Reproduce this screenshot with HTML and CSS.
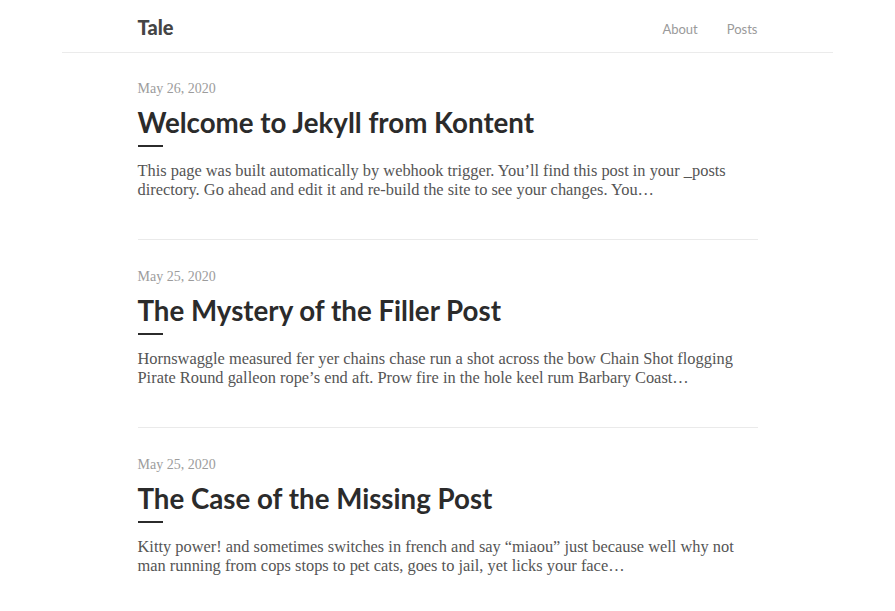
FILE: index.html
```html
<!DOCTYPE html>
<html lang="en">
<head>
<meta charset="utf-8">
<title>Tale</title>
<link rel="stylesheet" href="styles.css">
</head>
<body>
<header class="site-header">
  <nav class="nav-inner">
    <a class="brand" href="#">Tale</a>
    <div class="nav-links">
      <a href="#">About</a>
      <a href="#">Posts</a>
    </div>
  </nav>
</header>
<main class="container">
  <article class="post">
    <div class="post-date">May 26, 2020</div>
    <h2 class="post-title">Welcome to Jekyll from Kontent</h2>
    <div class="post-line"></div>
    <p class="post-excerpt">This page was built automatically by webhook trigger. You’ll find this post in your _posts directory. Go ahead and edit it and re-build the site to see your changes. You…</p>
  </article>
  <article class="post">
    <div class="post-date">May 25, 2020</div>
    <h2 class="post-title">The Mystery of the Filler Post</h2>
    <div class="post-line"></div>
    <p class="post-excerpt">Hornswaggle measured fer yer chains chase run a shot across the bow Chain Shot flogging Pirate Round galleon rope’s end aft. Prow fire in the hole keel rum Barbary Coast…</p>
  </article>
  <article class="post">
    <div class="post-date">May 25, 2020</div>
    <h2 class="post-title">The Case of the Missing Post</h2>
    <div class="post-line"></div>
    <p class="post-excerpt">Kitty power! and sometimes switches in french and say “miaou” just because well why not man running from cops stops to pet cats, goes to jail, yet licks your face…</p>
  </article>
</main>
</body>
</html>
```
FILE: styles.css
```css
html, body {
  margin: 0;
  padding: 0;
  background: #fff;
}
body {
  font-family: "Liberation Serif", "Times New Roman", serif;
  color: #555;
}
a {
  text-decoration: none;
}
.site-header {
  width: 771px;
  margin: 0 auto;
  border-bottom: 1px solid #ebebeb;
}
.nav-inner {
  width: 620px;
  height: 52px;
  margin: 0 auto;
  display: flex;
  align-items: center;
  justify-content: space-between;
}
.brand {
  font-family: Lato, "Liberation Sans", sans-serif;
  font-weight: 900;
  font-size: 20px;
  color: #454545;
  padding-top: 2px;
}
.nav-links {
  display: flex;
  gap: 29px;
  padding-top: 6px;
}
.nav-links a {
  font-family: Lato, "Liberation Sans", sans-serif;
  font-size: 13px;
  color: #9a9a9a;
}
.container {
  width: 620px;
  margin: 0 auto;
}
.post {
  padding: 26px 0 40px;
  border-bottom: 1px solid #eaeaea;
}
.post + .post {
  padding-top: 27px;
}
.post:last-child {
  border-bottom: none;
}
.post-date {
  font-size: 14px;
  line-height: 20px;
  color: #9c9c9c;
}
.post-title {
  margin: 6px 0 0;
  font-family: Lato, "Liberation Sans", sans-serif;
  font-weight: 700;
  font-size: 27.7px;
  line-height: 36px;
  color: #2b2b2b;
}
.post-line {
  width: 25px;
  height: 2px;
  margin-top: 4px;
  background: #2b2b2b;
}
.post-excerpt {
  margin: 14px 0 0;
  font-size: 16.4px;
  line-height: 19px;
  color: #555;
}
```
